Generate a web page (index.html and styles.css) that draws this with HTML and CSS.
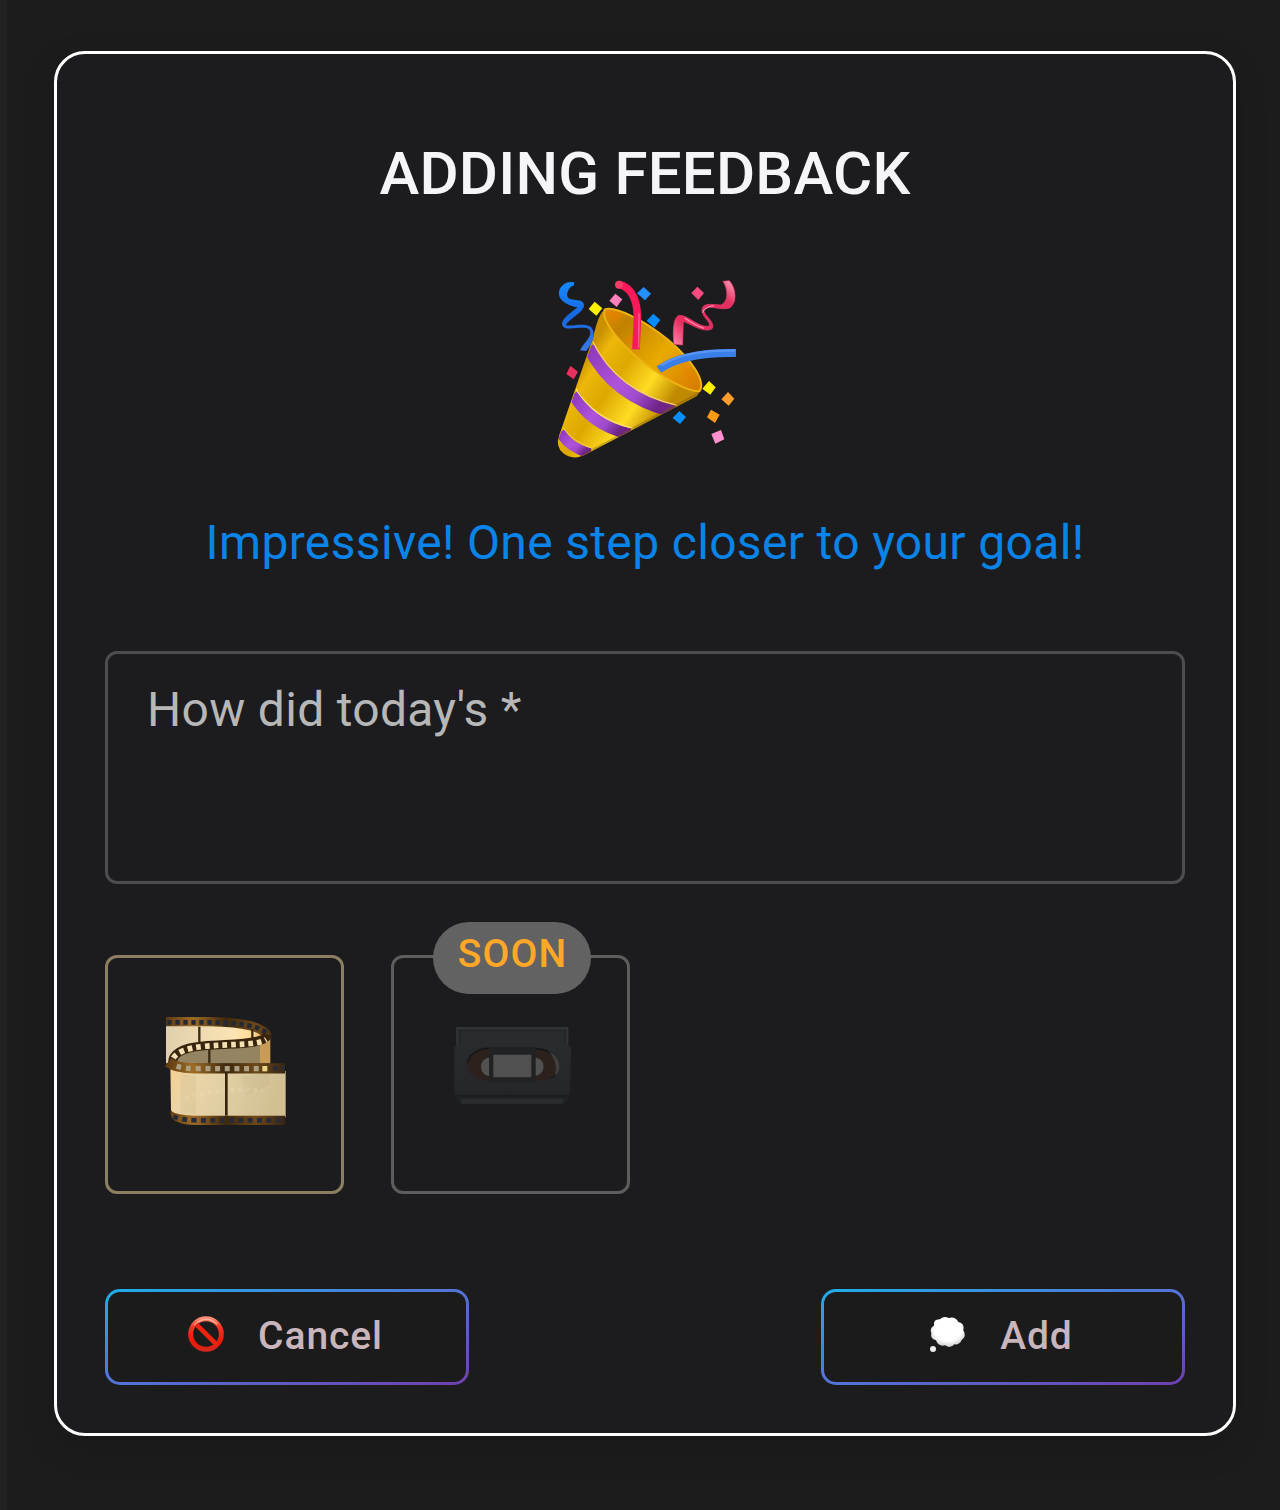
FILE: index.html
```html
<!DOCTYPE html>
<html lang="en">
<head>
<meta charset="utf-8">
<title>Adding feedback</title>
<link rel="stylesheet" href="styles.css">
</head>
<body>
<main class="dialog">
  <h1 class="title">ADDING FEEDBACK</h1>
  <svg class="party" viewBox="0 0 630 630" aria-hidden="true">
    <defs>
      <linearGradient id="cone" x1="110" y1="310" x2="350" y2="470" gradientUnits="userSpaceOnUse">
        <stop offset="0" stop-color="#c99000"/><stop offset=".15" stop-color="#edb80a"/><stop offset=".4" stop-color="#dda800"/><stop offset=".72" stop-color="#ffdc24"/><stop offset="1" stop-color="#c08a00"/>
      </linearGradient>
      <linearGradient id="mouth" x1="190" y1="140" x2="460" y2="380" gradientUnits="userSpaceOnUse">
        <stop offset="0" stop-color="#e68a00"/><stop offset=".2" stop-color="#c08200"/><stop offset=".6" stop-color="#e9aa00"/><stop offset="1" stop-color="#d87d00"/>
      </linearGradient>
      <linearGradient id="stripe" x1="0" y1="0" x2="1" y2=".6">
        <stop offset="0" stop-color="#8b39b9"/><stop offset=".5" stop-color="#b052dc"/><stop offset=".75" stop-color="#a04bcc"/><stop offset="1" stop-color="#702489"/>
      </linearGradient>
      <linearGradient id="blueRibbon" x1="0" y1="0" x2="0" y2="1">
        <stop offset="0" stop-color="#1489ff"/><stop offset=".5" stop-color="#1767e0"/><stop offset="1" stop-color="#3978e6"/>
      </linearGradient>
      <linearGradient id="pinkRibbon" x1="400" y1="240" x2="580" y2="50" gradientUnits="userSpaceOnUse">
        <stop offset="0" stop-color="#ff85aa"/><stop offset=".25" stop-color="#e82d61"/><stop offset=".8" stop-color="#e52e62"/><stop offset="1" stop-color="#ff9dba"/>
      </linearGradient>
      <clipPath id="coneClip"><path d="M190 138Q250 270 480 380L470 394L145 564Q100 590 70 565Q45 545 60 510Z"/></clipPath>
    </defs>
    <path d="M196 132Q175 145 160 215L58 510Q45 545 70 565Q100 590 145 564L470 394L480 380Q250 270 196 132Z" fill="url(#cone)"/>
    <g clip-path="url(#coneClip)" fill="none">
      <path d="M146 246Q220 397 402 440" stroke="url(#stripe)" stroke-width="37"/>
      <path d="M157 228Q232 380 412 421" stroke="#f3cd79" stroke-width="4"/>
      <path d="M100 386Q150 480 270 507" stroke="url(#stripe)" stroke-width="35"/>
      <path d="M105 367Q160 462 279 490" stroke="#ffe36d" stroke-width="4"/>
      <path d="M60 501Q86 549 151 565" stroke="url(#stripe)" stroke-width="31"/>
      <path d="M64 482Q100 534 162 552" stroke="#f1cf5d" stroke-width="3"/>
      <path d="M485 386L130 576" stroke="#755000" stroke-opacity=".35" stroke-width="18"/>
    </g>
    <path d="M194 134C219 120 310 163 386 226C460 289 497 350 479 378C450 382 391 350 332 309C264 261 180 172 194 134Z" fill="url(#mouth)" stroke="#efb313" stroke-width="6"/>
    <path d="M205 140L245 145 225 180ZM420 280L465 344 440 342ZM270 203L280 215 272 245 254 225Z" fill="#f47b00" opacity=".35"/>
    <path d="M235 58C278 66 294 112 292 166L288 253" fill="none" stroke="#fa1959" stroke-width="23"/>
    <circle cx="237" cy="59" r="12" fill="#f13d68"/>
    <path d="M297 145L296 250" stroke="#ff79a7" stroke-width="5" opacity=".65"/>
    <path d="M357 314C408 276 488 262 588 264" fill="none" stroke="#397fe7" stroke-width="24"/>
    <path d="M362 301C422 265 490 256 586 256" fill="none" stroke="#6ba4ff" stroke-width="7" opacity=".6"/>
    <path d="M102 52Q72 46 58 75C49 106 86 123 113 127C93 143 59 165 68 183C78 202 140 177 149 196C158 214 133 232 120 256L138 258C161 234 168 205 154 187C134 172 94 185 78 181C81 165 134 142 132 119C129 94 75 117 82 84Q85 68 102 61Z" fill="url(#blueRibbon)"/>
    <path d="M549 49L568 47C588 68 593 112 570 128C546 139 502 117 491 132C489 151 524 167 518 189C500 209 447 176 430 169L428 240L402 238C398 206 398 154 419 151C447 151 478 191 508 183C513 169 484 157 486 132C490 112 519 119 542 120C568 112 563 70 549 49Z" fill="url(#pinkRibbon)" stroke="#e93969" stroke-width="2"/>
    <path d="M488 143Q491 128 521 122M434 159Q465 181 492 190" fill="none" stroke="#ff8cac" stroke-width="4"/>
    <path d="M164 110L187 130 169 152 146 132Z" fill="#fff000"/>
    <path d="M226 86L247 103 230 126 208 107Z" fill="#ff81bb"/>
    <path d="M311 66L333 86 315 106 291 85Z" fill="#248fff"/>
    <path d="M340 146L361 165 343 188 320 167Z" fill="#078cff"/>
    <path d="M472 65L492 84 475 105 454 84Z" fill="#fa4b81"/>
    <path d="M91 302L114 320 101 343 79 327Z" fill="#e72f60"/>
    <path d="M507 348L527 367 511 389 487 371Z" fill="#fff000"/>
    <path d="M564 381L583 401 566 422 544 403Z" fill="#ff9d2c"/>
    <path d="M513 434L539 449 525 474 501 457Z" fill="#ff9914"/>
    <path d="M418 438L438 456 420 477 398 459Z" fill="#088eff"/>
    <path d="M543 495L553 523 526 536 514 507Z" fill="#ff92cc"/>
  </svg>
  <p class="message">Impressive! One step closer to your goal!</p>
  <div class="field">How did today's *</div>
  <div class="tiles">
    <div class="tile tile-film">
      <svg class="film" viewBox="0 0 450 420" aria-hidden="true">
        <defs>
          <linearGradient id="paper" x1="0" x2="1" y1="0" y2=".2"><stop offset="0" stop-color="#f6cf91"/><stop offset=".25" stop-color="#ead5a8"/><stop offset=".7" stop-color="#dccaa0"/><stop offset="1" stop-color="#d2bf92"/></linearGradient>
          <linearGradient id="backPaper" x1="0" x2="1"><stop offset="0" stop-color="#e0d0ae"/><stop offset=".65" stop-color="#fbe3b3"/><stop offset=".85" stop-color="#ffd991"/><stop offset="1" stop-color="#a9752e"/></linearGradient>
          <linearGradient id="brown" gradientUnits="userSpaceOnUse" x1="50" x2="407" y1="0" y2="0"><stop offset="0" stop-color="#5c3a12"/><stop offset=".22" stop-color="#a06c25"/><stop offset=".5" stop-color="#3e280d"/><stop offset=".75" stop-color="#6e4818"/><stop offset="1" stop-color="#332514"/></linearGradient>
        </defs>
        <path d="M48 54H202Q337 58 360 99V190H48Z" fill="url(#backPaper)"/>
        <path d="M72 190Q80 155 180 149Q319 146 360 107V190Z" fill="#958462"/>
        <path d="M330 130L361 111V190H330Z" fill="#c89c56"/>
        <path d="M48 65H182Q335 68 352 108" fill="none" stroke="url(#brown)" stroke-width="28"/>
        <path d="M52 67H182Q325 70 350 100" fill="none" stroke="#252936" stroke-width="14" stroke-dasharray="13 11"/>
        <path d="M148 80V127M307 86V120M178 148V190" stroke="#3c2b14" stroke-width="7"/>
        <path d="M68 194Q62 146 159 138C248 130 345 135 353 103" fill="none" stroke="#39240d" stroke-width="27"/>
        <path d="M70 174Q88 146 164 139C240 131 319 137 349 119" fill="none" stroke="#f4dfb0" stroke-width="17" stroke-dasharray="14 12"/>
        <path d="M61 190Q75 208 120 213H407V352H140Q65 350 63 329Z" fill="url(#paper)"/>
        <path d="M92 220L138 228V343L92 340ZM272 230L360 215V255L290 285Z" fill="#ab9268" opacity=".12"/>
        <path d="M105 293Q220 260 335 271" fill="none" stroke="#f5e4be" stroke-opacity=".25" stroke-width="13" stroke-dasharray="12 11"/>
        <path d="M54 187Q75 204 130 205H405" fill="none" stroke="url(#brown)" stroke-width="31"/>
        <path d="M80 198Q100 206 140 206H330" fill="none" stroke="#aaa083" stroke-width="16" stroke-dasharray="15 14"/>
        <path d="M337 198H352V214H337Z" fill="#ead78a"/>
        <path d="M369 198H382V213H369ZM396 198H404V213H396Z" fill="#292c38"/>
        <path d="M62 332Q80 346 137 347H405V375H137Q65 374 62 343Z" fill="url(#brown)"/>
        <path d="M70 350Q97 361 141 361H404" fill="none" stroke="#292c38" stroke-width="14" stroke-dasharray="15 13"/>
        <path d="M229 218V347" stroke="#38250d" stroke-width="8"/>
      </svg>
    </div>
    <div class="tile tile-video">
      <span class="badge">SOON</span>
      <svg class="tape" viewBox="0 0 435 330" aria-hidden="true">
        <defs><linearGradient id="tapeBody" x2="0" y2="1"><stop stop-color="#2a2c2e"/><stop offset=".8" stop-color="#25272a"/><stop offset="1" stop-color="#1d1e20"/></linearGradient></defs>
        <path d="M50 52H384V105L393 112L390 258L371 282H58L43 260V112L50 105Z" fill="url(#tapeBody)"/>
        <path d="M51 105V54H383V105" fill="none" stroke="#343638" stroke-width="4"/>
        <path d="M60 102V62H374V102" fill="none" stroke="#222426" stroke-width="4"/>
        <path d="M45 258H390" fill="none" stroke="#1b1c1e" stroke-width="4"/>
        <path d="M64 274H370" stroke="#2b2c2e" stroke-width="14"/>
        <path d="M151 114C105 111 80 142 83 168C85 195 115 213 155 212ZM279 114C330 112 361 140 359 173C357 200 326 214 279 212Z" fill="#2c211c"/>
        <path d="M151 115C108 113 85 140 83 158M282 116C327 114 356 145 356 174C354 191 345 199 333 204" fill="none" stroke="#17181a" stroke-width="5"/>
        <path d="M324 123Q360 139 359 174Q356 190 345 197Q355 153 324 123Z" fill="#3e3f3f"/>
        <path d="M155 142Q123 144 123 171Q124 197 155 200ZM280 142Q310 145 311 170Q310 195 280 199Z" fill="#515151"/>
        <path d="M147 112H287V217H147Z" fill="#202224"/>
        <path d="M160 134H274V202H160Z" fill="#505050"/>
      </svg>
    </div>
  </div>
  <div class="actions">
    <button class="action">
      <svg class="icon" viewBox="0 0 120 120" aria-hidden="true">
        <defs><linearGradient id="ban" x2="0" y2="1"><stop stop-color="#ff8a72"/><stop offset=".25" stop-color="#ed3827"/><stop offset=".75" stop-color="#f01705"/><stop offset="1" stop-color="#d6251c"/></linearGradient></defs>
        <circle cx="60" cy="60" r="46" fill="none" stroke="url(#ban)" stroke-width="15"/>
        <path d="M28 28L92 92" stroke="#ef2410" stroke-width="14"/>
        <path d="M24 34Q58 -1 94 31" fill="none" stroke="#ffc2ad" stroke-width="4" opacity=".7"/>
      </svg>
      <span>Cancel</span>
    </button>
    <button class="action">
      <svg class="icon" viewBox="0 0 120 120" aria-hidden="true">
        <defs><radialGradient id="cloud" cy=".4" r=".62"><stop offset=".65" stop-color="#fff"/><stop offset="1" stop-color="#c5c5c5"/></radialGradient></defs>
        <path d="M24 79Q6 74 10 57Q4 42 18 35Q15 15 36 16Q47 5 62 12Q82 6 91 24Q111 28 106 49Q117 67 101 78Q95 93 79 91Q66 106 52 94Q32 100 24 79Z" fill="url(#cloud)"/>
        <circle cx="15" cy="105" r="9" fill="#eee"/>
      </svg>
      <span>Add</span>
    </button>
  </div>
</main>
</body>
</html>
```
FILE: styles.css
```css
* { box-sizing: border-box; }
body {
  margin: 0;
  height: 1510px;
  padding: 51px 44px 0 47px;
  border-left: 7px solid #222223;
  background: #1c1c1c;
  font-family: Roboto, sans-serif;
}
.dialog {
  width: 1182px;
  height: 1385px;
  padding: 84px 48px 48px;
  border: 3px solid #fff;
  border-radius: 31px;
  background: #1c1c1e;
  box-shadow: 0 12px 36px rgba(0, 0, 0, .12);
  display: flex;
  flex-direction: column;
  align-items: center;
}
.title {
  margin: 0;
  font-size: 60px;
  line-height: 72px;
  font-weight: 500;
  letter-spacing: .22px;
  color: #f5f5f7;
  white-space: nowrap;
}
.party { width: 210px; height: 210px; margin-top: 55px; flex: none; }
.message {
  margin: 32px 0 0;
  font-size: 48px;
  line-height: 72px;
  letter-spacing: .34px;
  color: #0a84e8;
  white-space: nowrap;
}
.field {
  width: 1080px;
  height: 233px;
  margin-top: 72px;
  padding: 20px 39px;
  border: 3px solid #4d4d4f;
  border-radius: 12px;
  font-size: 48px;
  line-height: 72px;
  letter-spacing: .3px;
  color: #b7b7b8;
}
.tiles { width: 100%; display: flex; gap: 47px; margin-top: 71px; }
.tile {
  position: relative;
  width: 239px;
  height: 239px;
  border: 3px solid #5d5d5e;
  border-radius: 12px;
  padding: 42px;
}
.tile-film { border-color: #8c7e60; }
.film { display: block; width: 150px; height: 140px; }
.tile-video { padding: 52px 46px; }
.tape { display: block; width: 145px; height: 110px; }
.badge {
  position: absolute;
  left: 39px;
  top: -36px;
  width: 158px;
  height: 72px;
  padding-left: 1px;
  border-radius: 36px;
  background: #626262;
  color: #ffa726;
  font-size: 39px;
  font-weight: 500;
  line-height: 65px;
  letter-spacing: 1.1px;
  text-align: center;
}
.actions { width: 100%; display: flex; justify-content: space-between; margin-top: 95px; }
.action {
  width: 364px;
  height: 96px;
  padding: 0 5px 3px 0;
  border: 3px solid transparent;
  border-radius: 15px;
  background: linear-gradient(#1b1b1b, #1b1b1b) padding-box, linear-gradient(to bottom right, #1eaee8, #5079d8 45%, #6f3fb0) border-box;
  color: #c9b5bc;
  font: 500 39px/60px Roboto, sans-serif;
  letter-spacing: .9px;
  display: flex;
  align-items: center;
  justify-content: center;
  gap: 32px;
}
.icon { width: 40px; height: 40px; margin-bottom: 3px; }
```
